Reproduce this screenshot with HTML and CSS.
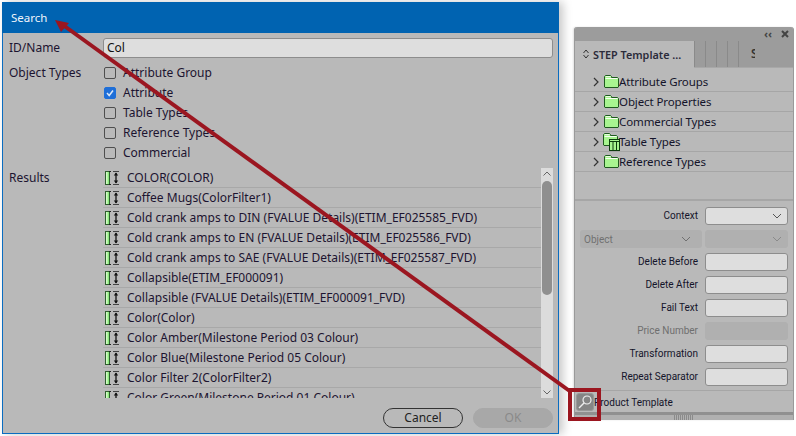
FILE: index.html
```html
<!DOCTYPE html>
<html lang="en">
<head>
<meta charset="utf-8">
<title>Search</title>
<link rel="stylesheet" href="styles.css">
</head>
<body>
<svg width="0" height="0" class="defs">
  <defs>
    <linearGradient id="barfill" x1="0" x2="1" y1="0" y2="0">
      <stop offset="0" stop-color="#f2fff0"/>
      <stop offset=".5" stop-color="#b4f7a0"/>
      <stop offset="1" stop-color="#5fd65a"/>
    </linearGradient>
    <symbol id="attr" viewBox="0 0 14 14">
      <rect x="0.500" y="0.500" width="4" height="13" fill="url(#barfill)" stroke="#2f5f2f"/>
      <path d="M4 .5h2M4 13.500h2" stroke="#222"/>
      <path d="M8 .5h6M8 13.500h6" stroke="#444"/>
      <path d="M11 2v10" stroke="#111" stroke-width="1.300"/>
      <path d="M8.800 4.500L11 1.500l2.200 3zM8.800 9.500L11 12.500l2.200-3z" fill="#111"/>
    </symbol>
    <symbol id="folder" viewBox="0 0 15 13">
      <path d="M0.500 3V1.500l1-1h5l1 1v1h6l1 1v8.500l-.5.5H1l-.5-.5z" fill="#a8f590" stroke="#1f5a1f"/>
      <path d="M1.500 3.500h12" stroke="#f6fff2"/>
      <path d="M2 1.500h4.500" stroke="#eaffe2"/>
    </symbol>
    <symbol id="chev" viewBox="0 0 8 10">
      <path d="M2 1l4 4-4 4" fill="none" stroke="#333" stroke-width="1.200"/>
    </symbol>
    <symbol id="down" viewBox="0 0 10 6">
      <path d="M1 1l4 4 4-4" fill="none" stroke="currentColor" stroke-width="1"/>
    </symbol>
  </defs>
</svg>

<section class="dialog">
  <header class="dialog-title">Search</header>
  <div class="dialog-body">
    <div class="form-row">
      <span class="form-label">ID/Name</span>
      <div class="text-input">Col</div>
    </div>
    <div class="types-row">
      <span class="form-label">Object Types</span>
      <ul class="type-list">
        <li class="type-item"><span class="check"></span>Attribute Group</li>
        <li class="type-item"><span class="check check-on"><svg width="10" height="10" viewBox="0 0 10 10"><path d="M2 5l2.200 2.500L8 2.500" fill="none" stroke="#dce8f8" stroke-width="1.500"/></svg></span>Attribute</li>
        <li class="type-item"><span class="check"></span>Table Types</li>
        <li class="type-item"><span class="check"></span>Reference Types</li>
        <li class="type-item"><span class="check"></span>Commercial</li>
      </ul>
    </div>
    <div class="results-row">
      <span class="form-label">Results</span>
      <div class="results">
        <ul class="result-list">
          <li class="result"><svg class="attr-icon"><use href="#attr"/></svg>COLOR(COLOR)</li>
          <li class="result"><svg class="attr-icon"><use href="#attr"/></svg>Coffee Mugs(ColorFilter1)</li>
          <li class="result"><svg class="attr-icon"><use href="#attr"/></svg>Cold crank amps to DIN (FVALUE Details)(ETIM_EF025585_FVD)</li>
          <li class="result"><svg class="attr-icon"><use href="#attr"/></svg>Cold crank amps to EN (FVALUE Details)(ETIM_EF025586_FVD)</li>
          <li class="result"><svg class="attr-icon"><use href="#attr"/></svg>Cold crank amps to SAE (FVALUE Details)(ETIM_EF025587_FVD)</li>
          <li class="result"><svg class="attr-icon"><use href="#attr"/></svg>Collapsible(ETIM_EF000091)</li>
          <li class="result"><svg class="attr-icon"><use href="#attr"/></svg>Collapsible (FVALUE Details)(ETIM_EF000091_FVD)</li>
          <li class="result"><svg class="attr-icon"><use href="#attr"/></svg>Color(Color)</li>
          <li class="result"><svg class="attr-icon"><use href="#attr"/></svg>Color Amber(Milestone Period 03 Colour)</li>
          <li class="result"><svg class="attr-icon"><use href="#attr"/></svg>Color Blue(Milestone Period 05 Colour)</li>
          <li class="result"><svg class="attr-icon"><use href="#attr"/></svg>Color Filter 2(ColorFilter2)</li>
          <li class="result"><svg class="attr-icon"><use href="#attr"/></svg>Color Green(Milestone Period 01 Colour)</li>
        </ul>
        <div class="scrollbar">
          <svg class="scroll-arrow" width="8" height="5"><path d="M0.500 4.500l3.500-3.500 3.500 3.500" fill="none" stroke="#666"/></svg>
          <div class="scroll-track"><div class="scroll-thumb"></div></div>
          <svg class="scroll-arrow" width="8" height="5"><path d="M0.500 0.500l3.500 3.500 3.500-3.500" fill="none" stroke="#666"/></svg>
        </div>
      </div>
    </div>
    <div class="dialog-actions">
      <button class="btn btn-cancel" type="button">Cancel</button>
      <button class="btn btn-ok" type="button">OK</button>
    </div>
  </div>
</section>

<aside class="panel">
  <div class="panel-top">
    <span class="panel-ctl">&#x2039;&#x2039;</span>
    <svg class="panel-close" width="8" height="8" viewBox="0 0 8 8"><path d="M1 1l6 6M7 1l-6 6" stroke="#444" stroke-width="2"/></svg>
  </div>
  <div class="panel-tabs">
    <div class="tab-active">
      <svg width="6" height="10" viewBox="0 0 6 10"><path d="M.5 4L3 1l2.500 3M.5 6L3 9l2.500-3" fill="none" stroke="#333"/></svg>
      <span>STEP Template ...</span>
    </div>
    <div class="tab-mini"></div><div class="tab-mini"></div><div class="tab-mini"></div><div class="tab-mini"></div>
    <div class="tab-rest"><span class="tab-clip">S</span></div>
  </div>
  <ul class="tree">
    <li class="tree-row"><svg class="chev"><use href="#chev"/></svg><svg class="folder"><use href="#folder"/></svg>Attribute Groups</li>
    <li class="tree-row"><svg class="chev"><use href="#chev"/></svg><svg class="folder"><use href="#folder"/></svg>Object Properties</li>
    <li class="tree-row"><svg class="chev"><use href="#chev"/></svg><svg class="folder"><use href="#folder"/></svg>Commercial Types</li>
    <li class="tree-row"><svg class="chev"><use href="#chev"/></svg><span class="folder-table"><svg class="folder folder-raised"><use href="#folder"/></svg><svg class="table-badge" width="11" height="12" viewBox="0 0 11 12"><rect x=".5" y=".5" width="10" height="11" fill="#a8f590" stroke="#0c3d0c"/><path d="M.5 2.500h10M4 2.500v9M7.500 2.500v9" stroke="#0c3d0c"/></svg></span>Table Types</li>
    <li class="tree-row"><svg class="chev"><use href="#chev"/></svg><svg class="folder"><use href="#folder"/></svg>Reference Types</li>
  </ul>
  <div class="props">
    <div class="prop"><span class="prop-label">Context</span><div class="field field-select"><svg class="caret" width="10" height="6"><use href="#down"/></svg></div></div>
    <div class="prop prop-object">
      <div class="field-object"><span>Object</span><svg class="caret" width="10" height="6"><use href="#down"/></svg></div>
      <div class="field field-off field-select"><svg class="caret" width="10" height="6"><use href="#down"/></svg></div>
    </div>
    <div class="prop"><span class="prop-label">Delete Before</span><div class="field"></div></div>
    <div class="prop"><span class="prop-label">Delete After</span><div class="field"></div></div>
    <div class="prop"><span class="prop-label">Fail Text</span><div class="field"></div></div>
    <div class="prop"><span class="prop-label prop-label-off">Price Number</span><div class="field field-off"></div></div>
    <div class="prop"><span class="prop-label">Transformation</span><div class="field"></div></div>
    <div class="prop"><span class="prop-label">Repeat Separator</span><div class="field"></div></div>
  </div>
  <div class="panel-foot">
    <span class="search-btn"><svg width="16" height="16" viewBox="0 0 16 16"><circle cx="10" cy="6" r="4" fill="none" stroke="#eee" stroke-width="1.200"/><path d="M7 9l-5 5" stroke="#eee" stroke-width="1.500"/></svg></span>
    <span class="foot-label">Product Template</span>
  </div>
  <div class="panel-grip"><span class="grip"></span></div>
</aside>

<svg class="annotation" width="796" height="436" viewBox="0 0 796 436">
  <path d="M571 392L63 25" stroke="#9b1620" stroke-width="4" fill="none"/>
  <path d="M55 20L69 23 61 32z" fill="#9b1620"/>
  <rect x="570" y="390" width="29" height="29" fill="none" stroke="#9b1620" stroke-width="4"/>
</svg>
</body>
</html>
```
FILE: styles.css
```css
* { box-sizing: border-box; }
html, body { margin: 0; padding: 0; }
body {
  width: 796px;
  height: 436px;
  position: relative;
  overflow: hidden;
  background: #fff;
  font-family: "Noto Sans", "Open Sans", sans-serif;
  font-size: 12px;
  color: #1c1430;
}
ul { list-style: none; margin: 0; padding: 0; }
.defs { position: absolute; }

.dialog {
  position: absolute;
  left: 2px;
  top: 2px;
  width: 557px;
  height: 432px;
  display: flex;
  flex-direction: column;
  background: #b9b9b9;
  border: 1px solid #0a6cc0;
  box-shadow: 4px 0 9px rgba(0, 0, 0, .22);
}
.dialog-title {
  height: 31px;
  flex: none;
  background: #0063b1;
  color: #eef4fb;
  font-size: 11.500px;
  padding: 7px 9px 0;
  margin: -1px -1px 0;
  line-height: 17px;
}
.dialog-body {
  flex: 1;
  display: flex;
  flex-direction: column;
  padding: 5px 5px 5px 6px;
}
.form-row { display: flex; height: 20px; align-items: center; }
.form-label { width: 94px; flex: none; line-height: 20px; }
.text-input {
  flex: 1;
  height: 20px;
  padding-left: 3px;
  line-height: 18px;
  background: #dedede;
  border: 1px solid #8d8d8d;
  border-radius: 3px;
  color: #111;
}
.types-row { display: flex; margin-top: 5px; height: 100px; }
.type-item { height: 20px; display: flex; align-items: center; line-height: 20px; }
.check {
  width: 12px;
  height: 12px;
  margin: 0 7px 0 1px;
  border: 1px solid #4e4e4e;
  border-radius: 2px;
  display: flex;
  align-items: center;
  justify-content: center;
}
.check-on { background: #1f6fd8; border-color: #1f6fd8; }
.results-row { display: flex; margin-top: 5px; height: 230px; }
.results { flex: 1; display: flex; height: 230px; overflow: hidden; }
.result-list { flex: 1; min-width: 0; overflow: hidden; }
.result {
  height: 20px;
  display: flex;
  align-items: center;
  line-height: 19px;
  white-space: nowrap;
  border-bottom: 1px solid #a8a8a8;
}
.attr-icon { width: 14px; height: 14px; margin: 0 8px 0 2px; flex: none; }
.scrollbar {
  width: 12px;
  flex: none;
  background: #dcdcdc;
  display: flex;
  flex-direction: column;
  align-items: center;
}
.scroll-arrow { flex: none; margin: 3px 0; }
.scroll-track { flex: 1; width: 100%; padding: 1px 1px 0; }
.scroll-thumb { height: 114px; background: #8f8f8f; border-radius: 5px; margin-top: 1px; }
.dialog-actions { display: flex; justify-content: flex-end; gap: 10px; margin-top: 10px; }
.btn {
  width: 80px;
  height: 20px;
  font: inherit;
  line-height: 16px;
  padding: 0;
  border-radius: 10px;
  background: transparent;
}
.btn-cancel { border: 1px solid #333; color: #222; }
.btn-ok { border: 1px solid #a8a8a8; background: #a8a8a8; color: #8a8a8a; }

.panel {
  position: absolute;
  left: 574px;
  top: 27px;
  width: 220px;
  height: 393px;
  background: #b9b9b9;
  border: 1px solid #9a9a9a;
  border-top: 0;
  border-bottom: 0;
  border-radius: 3px 3px 0 0;
  display: flex;
  flex-direction: column;
  box-shadow: -1px 0 2px rgba(0, 0, 0, .12);
}
.panel-top {
  height: 14px;
  flex: none;
  background: #9c9c9c;
  display: flex;
  align-items: center;
  justify-content: flex-end;
  padding-right: 4px;
  gap: 9px;
  border-radius: 3px 3px 0 0;
}
.panel-ctl { font-size: 11px; line-height: 12px; color: #444; font-weight: 700; }
.panel-tabs { height: 27px; flex: none; display: flex; background: #9c9c9c; border-bottom: 1px solid #a8a8a8; }
.tab-active {
  width: 119px;
  background: #b9b9b9;
  display: flex;
  align-items: center;
  gap: 4px;
  padding: 0 0 1px 8px;
  font-weight: 600;
  font-size: 10.800px;
  color: #2b2b3a;
  margin-bottom: -1px;
  white-space: nowrap;
}
.tab-mini { width: 11px; border-left: 1px solid #8a8a8a; }
.tab-rest { flex: 1; border-left: 1px solid #8a8a8a; overflow: hidden; padding-left: 12px; line-height: 25px; color: #333; font-weight: 600; }
.tab-clip { display: block; width: 4px; overflow: hidden; }
.tree { height: 133px; flex: none; padding-top: 4px; border-bottom: 2px solid #a6a6a6; }
.tree-row {
  height: 20px;
  display: flex;
  align-items: center;
  padding-left: 17px;
  line-height: 19px;
  font-size: 11.500px;
  letter-spacing: -.1px;
  color: #14142a;
  border-bottom: 1px solid #a6a6a6;
  white-space: nowrap;
}
.chev { width: 8px; height: 10px; flex: none; margin-right: 4px; }
.folder { width: 15px; height: 13px; flex: none; }
.folder-table { position: relative; width: 15px; height: 13px; display: block; flex: none; }
.folder-raised { position: absolute; left: -1px; top: -2px; }
.table-badge { position: absolute; left: 5px; top: 4px; }
.props { height: 190px; flex: none; padding-top: 6px; display: flex; flex-direction: column; gap: 5px; border-bottom: 1px solid #a6a6a6; }
.prop { height: 18px; display: flex; align-items: center; justify-content: flex-end; padding-right: 5px; font-family: Roboto, "Noto Sans", sans-serif; font-size: 10px; color: #14142a; }
.prop-label { margin: 0 7px 2px 0; white-space: nowrap; }
.prop-label-off { color: #6f6f6f; }
.field {
  width: 83px;
  height: 18px;
  background: #dedede;
  border: 1px solid #8d8d8d;
  border-radius: 3px;
  flex: none;
}
.field-select { display: flex; align-items: center; justify-content: flex-end; padding-right: 5px; color: #555; }
.field-off { background: #b0b0b0; border-color: #b0b0b0; color: #8a8a8a; }
.prop-object { justify-content: space-between; padding-left: 5px; }
.field-object {
  width: 122px;
  height: 18px;
  background: #b0b0b0;
  border-radius: 3px;
  display: flex;
  align-items: center;
  justify-content: space-between;
  padding: 0 11px 0 4px;
  color: #707070;
}
.panel-foot { height: 24px; flex: none; display: flex; align-items: center; padding-left: 1px; font-family: Roboto, "Noto Sans", sans-serif; font-size: 10px; color: #14142a; border-bottom: 3px solid #909090; }
.foot-label { margin-top: 1px; }
.search-btn {
  width: 18px;
  height: 18px;
  background: #858585;
  border: 1px solid #989898;
  border-radius: 3px;
  display: flex;
  align-items: center;
  justify-content: center;
}
.panel-grip { flex: 1; display: flex; justify-content: center; background: #b0b0b0; }
.grip { width: 20px; height: 100%; background: repeating-linear-gradient(90deg, #8a8a8a 0 1px, #b0b0b0 1px 2px); }

.annotation { position: absolute; left: 0; top: 0; pointer-events: none; }
```
